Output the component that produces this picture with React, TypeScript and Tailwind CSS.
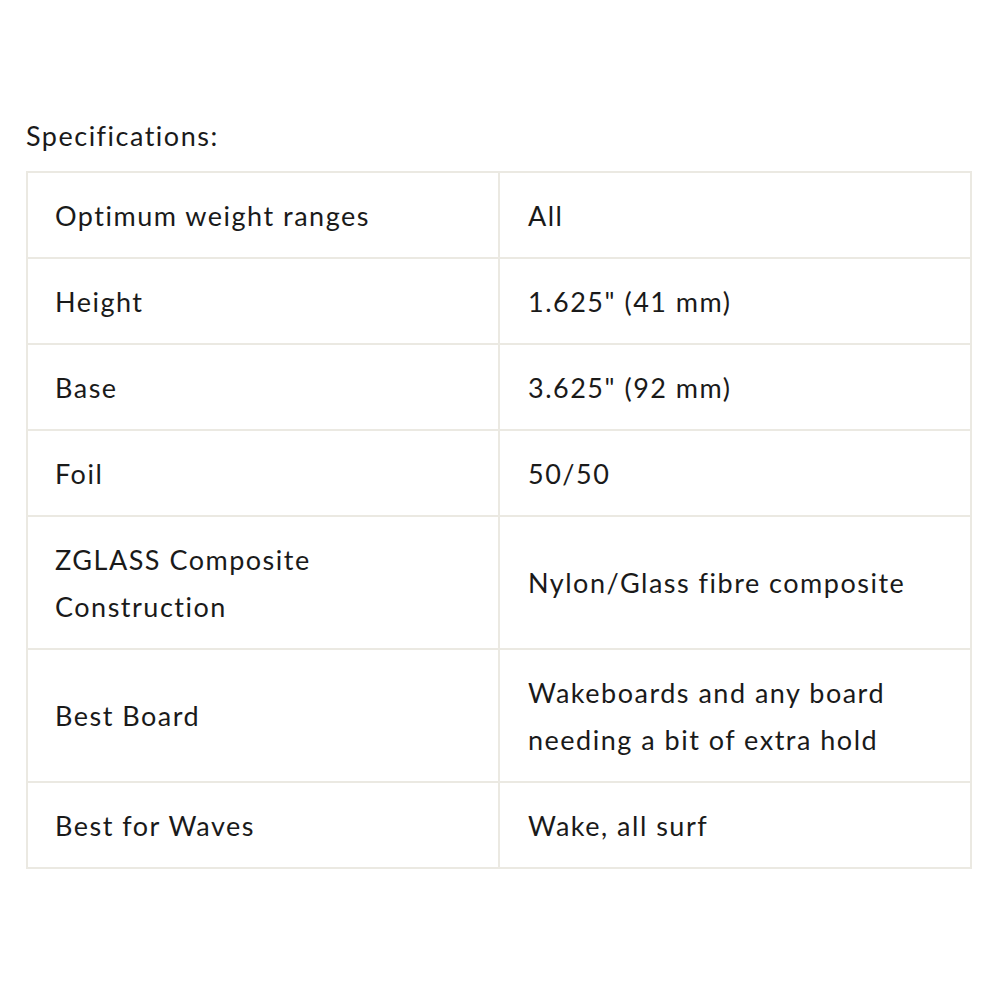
const rows: [string, string][] = [
  ["Optimum weight ranges", "All"],
  ["Height", "1.625\" (41 mm)"],
  ["Base", "3.625\" (92 mm)"],
  ["Foil", "50/50"],
  ["ZGLASS Composite Construction", "Nylon/Glass fibre composite"],
  ["Best Board", "Wakeboards and any board needing a bit of extra hold"],
  ["Best for Waves", "Wake, all surf"],
];

export default function App() {
  return (
    <div className="w-[1000px] h-[1000px] bg-white px-[26px] pt-[116px] font-['Lato','Open_Sans',sans-serif] text-[#1a1a1a] tracking-[1.5px]">
      <p className="text-[27px] leading-[40px] mb-[15px]">Specifications:</p>
      <table className="w-[946px] border-collapse table-fixed">
        <tbody>
          {rows.map(([k, v]) => (
            <tr key={k}>
              <td className="w-1/2 border-2 border-[#ebe9e2] pl-[27px] pr-[28px] py-[18.5px] text-[27px] leading-[47px] align-middle">
                {k}
              </td>
              <td className="w-1/2 border-2 border-[#ebe9e2] px-[28px] py-[18.5px] text-[27px] leading-[47px] align-middle">
                {v}
              </td>
            </tr>
          ))}
        </tbody>
      </table>
    </div>
  );
}
